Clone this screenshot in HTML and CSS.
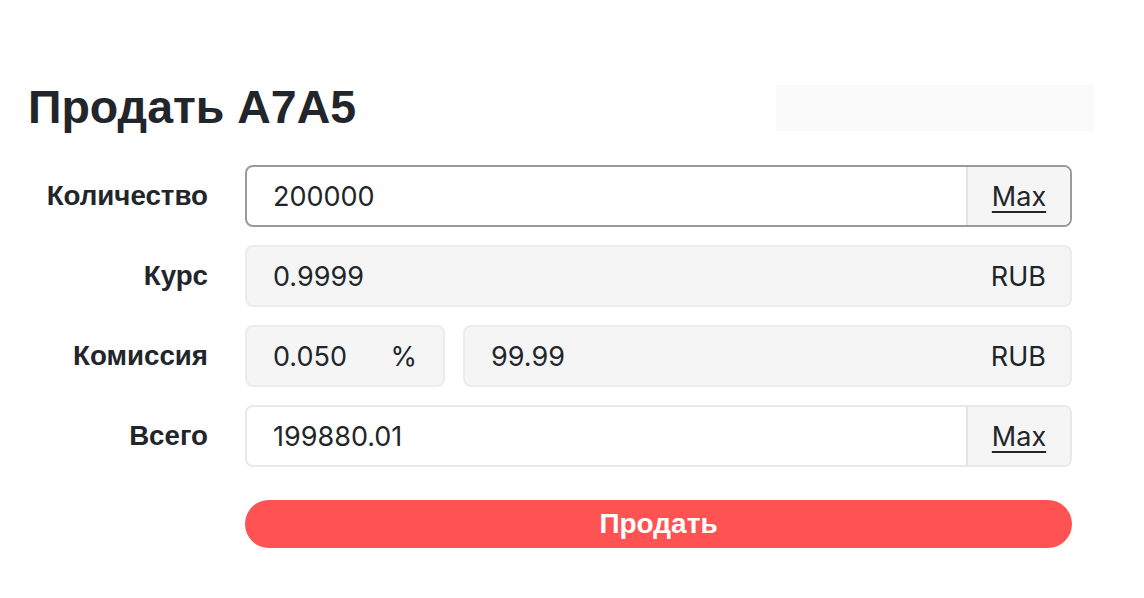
FILE: index.html
```html
<!DOCTYPE html>
<html lang="ru">
<head>
<meta charset="utf-8">
<title>Продать A7A5</title>
<link rel="stylesheet" href="styles.css">
</head>
<body>
<div class="page">
  <div class="header">
    <h1 class="title">Продать A7A5</h1>
    <div class="placeholder"></div>
  </div>
  <form class="form">
    <label class="label">Количество</label>
    <div class="group group-focus">
      <span class="value">200000</span>
      <span class="addon"><span class="max">Max</span></span>
    </div>

    <label class="label">Курс</label>
    <div class="group group-disabled">
      <span class="value">0.9999</span>
      <span class="suffix">RUB</span>
    </div>

    <label class="label">Комиссия</label>
    <div class="split">
      <div class="group group-disabled group-small">
        <span class="value">0.050</span>
        <span class="suffix">%</span>
      </div>
      <div class="group group-disabled">
        <span class="value">99.99</span>
        <span class="suffix">RUB</span>
      </div>
    </div>

    <label class="label">Всего</label>
    <div class="group">
      <span class="value">199880.01</span>
      <span class="addon"><span class="max">Max</span></span>
    </div>

    <span></span>
    <button type="button" class="submit">Продать</button>
  </form>
</div>
</body>
</html>
```

FILE: styles.css
```css
* { box-sizing: border-box; }
html, body { margin: 0; padding: 0; background: #fff; }
body {
  font-family: "Inter", "Noto Sans", sans-serif;
  color: #212529;
}
.page {
  padding: 80px 50px 0 28px;
}
.header {
  display: flex;
  align-items: flex-start;
  justify-content: space-between;
  height: 85px;
}
.title {
  margin: 0;
  font-family: "Liberation Sans", Arial, sans-serif;
  font-weight: 700;
  font-size: 46.5px;
  line-height: 54px;
  color: #22252a;
}
.placeholder {
  margin-top: 5px;
  width: 318px;
  height: 46px;
  background: #fafafa;
}
.form {
  display: grid;
  grid-template-columns: 180px 827px;
  column-gap: 37px;
  row-gap: 18px;
  align-items: center;
}
.label {
  text-align: right;
  font-family: "Liberation Sans", Arial, sans-serif;
  font-weight: 700;
  font-size: 27.7px;
  color: #22252a;
}
.group {
  display: flex;
  align-items: stretch;
  height: 62px;
  border: 2px solid #e9e9ea;
  border-radius: 8px;
  background: #fff;
  overflow: hidden;
  font-size: 27px;
}
.group-focus { border-color: #9a9a9a; }
.group-disabled { background: #f5f5f6; border-color: #ececec; }
.value {
  flex: 1;
  display: flex;
  align-items: center;
  padding-left: 26px;
}
.suffix {
  display: flex;
  align-items: center;
  padding: 0 24px;
}
.addon {
  display: flex;
  align-items: center;
  justify-content: center;
  width: 104px;
  background: #f5f5f6;
  border-left: 2px solid #e3e3e3;
}
.max {
  text-decoration: underline;
  text-decoration-thickness: 2px;
  text-underline-offset: 5px;
}
.split {
  display: grid;
  grid-template-columns: 200px 1fr;
  gap: 18px;
}
.group-small .suffix { padding: 0 26px; }
.submit {
  height: 48px;
  margin-top: 15px;
  border: none;
  border-radius: 24px;
  background: #ff5353;
  color: #fff;
  font-family: "Liberation Sans", Arial, sans-serif;
  font-weight: 700;
  font-size: 28px;
  cursor: pointer;
}
```
